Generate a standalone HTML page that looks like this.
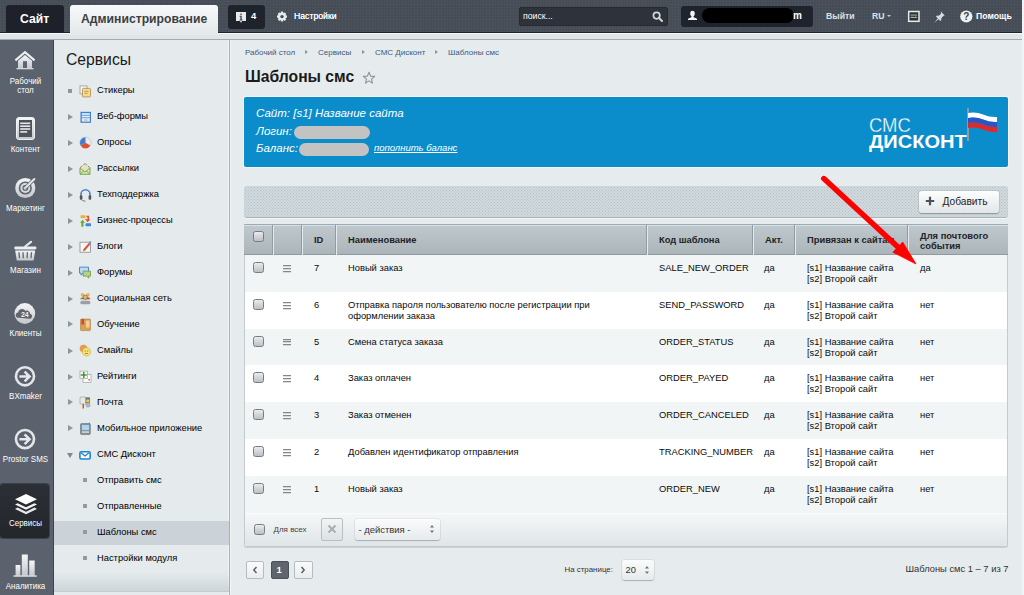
<!DOCTYPE html>
<html><head><meta charset="utf-8">
<style>
*{margin:0;padding:0;box-sizing:border-box}
html,body{width:1024px;height:595px;overflow:hidden}
body{position:relative;font-family:"Liberation Sans",sans-serif;background:#e4e9eb;color:#000}
.a{position:absolute}
.nw{white-space:nowrap}
#top{left:0;top:0;width:1024px;height:33px;background-color:#464c55;background-image:repeating-linear-gradient(90deg,rgba(255,255,255,.022) 0 1px,transparent 1px 3px),repeating-linear-gradient(0deg,rgba(255,255,255,.022) 0 1px,transparent 1px 3px);border-bottom:1px solid #202328}
#strip{left:0;top:33px;width:1024px;height:7px;background:#dfe5e8;border-top:1.5px solid #f8fafa;border-bottom:1px solid #a3abb0}
.tbtn{background:#1e2129;border-radius:3px 3px 0 0}
.tw{color:#fff;font-weight:bold}
#side{left:0;top:40px;width:54px;height:555px;background-color:#5e6571;background-image:radial-gradient(rgba(40,45,55,.10) 0.5px,transparent 0.9px);background-size:2px 2px;border-right:1px solid #3f444b}
#menu{left:54px;top:40px;width:175px;height:555px;background:#e5eaec;border-right:1px solid #f3f6f7}
#vline{left:229px;top:40px;width:1px;height:555px;background:#9fb0c4}
#vline2{left:230px;top:40px;width:1px;height:555px;background:#f2f5f6}
#content{left:231px;top:40px;width:793px;height:555px;background:#e6ebed}
.sl{color:#fff;font-size:8.2px;text-align:center;width:51px;left:0;line-height:8.6px;white-space:nowrap;transform:scaleX(0.975)}
.mi{font-size:9.36px;color:#000;left:97px;line-height:11px}
.bul{left:68px;width:4px;height:4px;background:#8f969c}
.tri{left:68px;width:0;height:0;border-left:5px solid #8f969c;border-top:3.5px solid transparent;border-bottom:3.5px solid transparent}
.ico{left:79px;width:12px;height:12px}
.sb{left:83px;width:4px;height:4px;background:#939aa0}

.bc{font-size:8px;line-height:10px;color:#3d597d;top:47.5px}
.bcs{top:50px;width:0;height:0;border-left:3px solid #8a949c;border-top:2.5px solid transparent;border-bottom:2.5px solid transparent}
.th{font-size:9.36px;font-weight:bold;color:#1f2326;line-height:10px}
.td{font-size:9.36px;color:#0a0a0a;line-height:11px}
.cb{width:11px;height:11px;border-radius:2.5px;border:1px solid #767c81;background:linear-gradient(#e9ebed,#bcc0c4);left:253px}
.hb{left:283px;width:8px;height:1px;background:#7f888f;box-shadow:0 0.5px 0 rgba(127,136,143,.5)}
.csep{top:225px;height:30px;width:2px;border-left:1px solid #919ca2;border-right:1px solid #e6eaec}
</style></head><body>
<div id="top" class="a"></div>
<div id="strip" class="a"></div>
<!-- top buttons -->
<div class="a tbtn" style="left:6px;top:5px;width:58px;height:27.5px"></div>
<div class="a tw nw" style="left:20px;top:12px;font-size:12.2px;line-height:14px">Сайт</div>
<div class="a" style="left:70px;top:5px;width:148px;height:30px;border-radius:3px 3px 0 0;background:linear-gradient(#f7f9fa,#e3e8ea)"></div>
<div class="a nw" style="left:81px;top:12px;font-size:12.2px;line-height:14px;font-weight:bold;color:#3b3f45">Администрирование</div>


<div class="a" style="left:228px;top:5px;width:37px;height:23.5px;border-radius:3px;background:#1f232c"></div>
<svg class="a" style="left:235px;top:11px" width="12" height="13" viewBox="0 0 12 13"><path d="M1 1h10v9H7l-1 2-1-2H1z" fill="#e8eaec"/><rect x="5.3" y="2.6" width="1.4" height="1.3" fill="#3a3d42"/><path d="M4.6 4.8h2.1v3.6h0.8v1H4.6v-1h0.8V5.8H4.6z" fill="#3a3d42"/></svg>
<div class="a tw nw" style="left:251px;top:10px;font-size:9.5px;line-height:11px">4</div>
<svg class="a" style="left:276px;top:11px" width="12" height="12" viewBox="0 0 12 12"><g transform="translate(6 5.6)"><g fill="#e9ebed"><rect x="-1.3" y="-5" width="2.6" height="10" rx="0.8"/><rect x="-1.3" y="-5" width="2.6" height="10" rx="0.8" transform="rotate(45)"/><rect x="-1.3" y="-5" width="2.6" height="10" rx="0.8" transform="rotate(90)"/><rect x="-1.3" y="-5" width="2.6" height="10" rx="0.8" transform="rotate(135)"/></g><circle r="3.7" fill="#e9ebed"/><circle r="1.7" fill="#464c55"/></g></svg>
<div class="a nw" style="left:294px;top:10px;font-size:8.7px;line-height:12px;color:#fff;text-shadow:0 0 0.4px #fff">Настройки</div>

<div class="a" style="left:519px;top:6.5px;width:149px;height:19.5px;border-radius:2px;background:#2e323b;border:1px solid #272a31"></div>
<div class="a nw" style="left:523px;top:10px;font-size:8.7px;line-height:12px;color:#fff">поиск...</div>
<svg class="a" style="left:652px;top:11px" width="11" height="11" viewBox="0 0 11 11"><circle cx="4.6" cy="4.6" r="3.2" fill="none" stroke="#d3d6d9" stroke-width="1.7"/><path d="M7 7l3 3" stroke="#d3d6d9" stroke-width="2" stroke-linecap="round"/></svg>

<div class="a" style="left:681px;top:6px;width:132px;height:21px;border-radius:3px;background:#1f232d"></div>
<svg class="a" style="left:687px;top:10px" width="11" height="11" viewBox="0 0 11 11"><path d="M5.5 0.8c1.7 0 2.3 1.3 2.3 2.6 0 1.3-0.6 2.6-1.4 3.1 0 0.4 0.2 0.7 0.8 0.9 1.6 0.5 2.8 1 2.8 1.8v0.9H1v-0.9c0-0.8 1.2-1.3 2.8-1.8 0.6-0.2 0.8-0.5 0.8-0.9C3.8 6 3.2 4.7 3.2 3.4c0-1.3 0.6-2.6 2.3-2.6z" fill="#f2f3f4"/></svg>
<div class="a" style="left:702px;top:8px;width:92px;height:15px;border-radius:8px;background:#000"></div>
<div class="a tw nw" style="left:793px;top:10px;font-size:10px;line-height:12px">m</div>

<div class="a nw" style="left:826px;top:10.3px;font-size:8.7px;line-height:12px;color:#dde0e4;font-weight:bold">Выйти</div>
<div class="a nw" style="left:872px;top:10.3px;font-size:8.7px;line-height:12px;color:#dde0e4;font-weight:bold">RU</div>
<div class="a" style="left:886.5px;top:15px;width:0;height:0;border-top:2.5px solid #c9cdd1;border-left:2.5px solid transparent;border-right:2.5px solid transparent"></div>
<svg class="a" style="left:907px;top:10px" width="14" height="13" viewBox="0 0 14 13"><rect x="1.7" y="1.5" width="10.3" height="9.8" fill="#2f3238" stroke="#e8eaec" stroke-width="1.5"/><rect x="3.6" y="4.6" width="6.5" height="0.9" fill="#b8bcc0"/><rect x="3.6" y="7" width="6.5" height="0.9" fill="#b8bcc0"/><rect x="4.6" y="5.6" width="0.8" height="1.3" fill="#8a8e92"/><rect x="8.2" y="5.6" width="0.8" height="1.3" fill="#8a8e92"/></svg>
<svg class="a" style="left:933px;top:10px" width="13" height="13" viewBox="0 0 13 13"><path d="M7.6 1.2l4.2 4.2-1.2 0.4-2.4 2.4 0.2 1.8-1 1-1.8-1.8-4.4 3.6 3.6-4.4L3 6.6l1-1 1.8 0.2 2.4-2.4z" fill="#d8dadd"/></svg>
<svg class="a" style="left:960px;top:10px" width="13" height="13" viewBox="0 0 13 13"><circle cx="6.3" cy="6.5" r="6.1" fill="#eef0f2"/><text x="6.3" y="10.3" text-anchor="middle" font-family="Liberation Sans" font-weight="bold" font-size="10" fill="#3c3f45">?</text></svg>
<div class="a nw" style="left:976px;top:10px;font-size:8.7px;line-height:12px;color:#fff;font-weight:bold">Помощь</div>

<div id="side" class="a"></div>

<div class="a" style="left:0;top:483.5px;width:48.5px;height:54.5px;border-radius:3px;background:linear-gradient(#2c3036,#23262b);box-shadow:0 0 0 1px #3c4047"></div>
<svg class="a" style="left:0;top:40px" width="54" height="555" viewBox="0 40 54 555">
<defs><linearGradient id="gi" x1="0" y1="0" x2="0" y2="1"><stop offset="0" stop-color="#f4f5f6"/><stop offset="1" stop-color="#c4c7cb"/></linearGradient></defs>
<!-- house -->
<path d="M15.4 60.3L25 52.2l9.6 8.1" fill="none" stroke="#eceef0" stroke-width="2.2"/>
<path d="M18 60.8L25 55l7 5.8V68.6H18z" fill="url(#gi)"/>
<rect x="23" y="61.2" width="4" height="7.4" fill="#5e6571"/>
<rect x="16.5" y="68" width="17" height="1.3" fill="#d5d8db"/>
<!-- content -->
<rect x="16.5" y="117.5" width="18" height="22" rx="2.5" fill="url(#gi)" stroke="#f0f1f2" stroke-width="1"/>
<rect x="19" y="120" width="13" height="17" fill="#4e535b"/>
<g fill="#e6e8ea"><rect x="20.2" y="122.5" width="10" height="1.6"/><rect x="20.2" y="125.4" width="10" height="1.6"/><rect x="20.2" y="128.2" width="10" height="1.6"/><rect x="20.2" y="131.1" width="7" height="1.6"/></g>
<!-- marketing -->
<circle cx="25.3" cy="188" r="10.1" fill="url(#gi)"/>
<circle cx="25.3" cy="188" r="6.6" fill="#5e6571"/>
<circle cx="25.3" cy="188" r="5" fill="#d9dcdf"/>
<circle cx="25.3" cy="188" r="3" fill="#5e6571"/>
<circle cx="25.3" cy="188" r="1.7" fill="#d9dcdf"/>
<path d="M25.3 188L34.2 179.2" stroke="#5e6571" stroke-width="3.6"/>
<path d="M26 187.3L34.4 179" stroke="#e6e8ea" stroke-width="2" stroke-linecap="round"/>
<!-- shop -->
<path d="M25.2 246.5L31 241.8" stroke="#e8eaec" stroke-width="2.2" stroke-linecap="round"/>
<rect x="14.2" y="246.6" width="22.3" height="2.9" rx="1.4" fill="#eceef0"/>
<path d="M15.2 250.6h20l-1.6 10H16.8z" fill="url(#gi)"/>
<g fill="#5e6571"><path d="M18.3 252.2h1.3l0.5 6h-1.3z"/><path d="M22.4 252.2h1.3l0.2 6h-1.3z"/><path d="M26.7 252.2h1.3l-0.2 6h-1.3z"/><path d="M30.9 252.2h1.3l-0.6 6h-1.3z"/></g>
<!-- clients -->
<circle cx="24.8" cy="313.5" r="10.4" fill="url(#gi)"/>
<path d="M18.5 317.8c-1.8 0-2.8-1.2-2.8-2.6 0-1.4 1-2.5 2.4-2.6 0.3-2 1.9-3.5 4-3.5 1.4 0 2.6 0.7 3.3 1.8 0.4-0.2 0.9-0.3 1.4-0.3 1.8 0 3.2 1.4 3.3 3.1 1.2 0.3 2 1.3 2 2.5 0 1.5-1.1 2.6-2.6 2.6z" fill="#5f646d"/>
<text x="24.8" y="316.6" text-anchor="middle" font-family="Liberation Sans" font-weight="bold" font-size="7" fill="#f0f1f2">24</text>
<!-- bxmaker -->
<circle cx="25" cy="376.3" r="9.05" fill="none" stroke="#e3e5e8" stroke-width="2.6"/>
<path d="M19.4 376.5h10M24.6 371.6l5 4.9-5 4.9" fill="none" stroke="#e6e8ea" stroke-width="2.5"/>
<!-- prostor -->
<circle cx="25" cy="439.1" r="9.05" fill="none" stroke="#e3e5e8" stroke-width="2.6"/>
<path d="M19.4 439.3h10M24.6 434.4l5 4.9-5 4.9" fill="none" stroke="#e6e8ea" stroke-width="2.5"/>
<!-- services layers -->
<path d="M26 494l11 5.3-11 5.3-11-5.3z" fill="#fff"/>
<path d="M17.6 503.2L26 507.3l8.4-4.1 2.6 1.3-11 5.3-11-5.3z" fill="#f2f3f4"/>
<path d="M17.6 507.6L26 511.7l8.4-4.1 2.6 1.3-11 5.3-11-5.3z" fill="#e6e8ea"/>
<!-- analytics -->
<g fill="url(#gi)"><rect x="15.6" y="565" width="4.8" height="11"/><rect x="21.8" y="554.5" width="6" height="21.5"/><rect x="29.2" y="560.5" width="5.5" height="15.5"/></g>
<rect x="13.5" y="575.3" width="23.3" height="1.5" fill="#d8dbde"/>
</svg>
<div class="a sl" style="top:78.2px">Рабочий<br>стол</div>
<div class="a sl" style="top:146.2px">Контент</div>
<div class="a sl" style="top:205.2px">Маркетинг</div>
<div class="a sl" style="top:267.2px">Магазин</div>
<div class="a sl" style="top:330.2px">Клиенты</div>
<div class="a sl" style="top:393.2px">BXmaker</div>
<div class="a sl" style="top:456px">Prostor SMS</div>
<div class="a sl" style="top:520px">Сервисы</div>
<div class="a sl" style="top:583px">Аналитика</div>

<div id="menu" class="a"></div>
<div class="a" style="left:54px;top:521px;width:175px;height:24px;background:#cbd3d8"></div>
<div class="a nw" style="left:66px;top:51.2px;font-size:15.7px;line-height:18px;color:#1b1b1b">Сервисы</div>
<div class="a mi nw" style="top:85px">Стикеры</div>
<div class="a bul" style="top:89px"></div>
<div class="a mi nw" style="top:111px">Веб-формы</div>
<div class="a tri" style="top:113.72px"></div>
<div class="a mi nw" style="top:137px">Опросы</div>
<div class="a tri" style="top:139.64px"></div>
<div class="a mi nw" style="top:163px">Рассылки</div>
<div class="a tri" style="top:165.66px"></div>
<div class="a mi nw" style="top:189px">Техподдержка</div>
<div class="a tri" style="top:191.58px"></div>
<div class="a mi nw" style="top:215px">Бизнес-процессы</div>
<div class="a tri" style="top:217.60px"></div>
<div class="a mi nw" style="top:241px">Блоги</div>
<div class="a tri" style="top:243.62px"></div>
<div class="a mi nw" style="top:267px">Форумы</div>
<div class="a tri" style="top:269.54px"></div>
<div class="a mi nw" style="top:293px">Социальная сеть</div>
<div class="a tri" style="top:295.56px"></div>
<div class="a mi nw" style="top:319px">Обучение</div>
<div class="a tri" style="top:321.48px"></div>
<div class="a mi nw" style="top:345px">Смайлы</div>
<div class="a tri" style="top:347.50px"></div>
<div class="a mi nw" style="top:371px">Рейтинги</div>
<div class="a tri" style="top:373.52px"></div>
<div class="a mi nw" style="top:397px">Почта</div>
<div class="a tri" style="top:399.44px"></div>
<div class="a mi nw" style="top:423px">Мобильное приложение</div>
<div class="a tri" style="top:425.46px"></div>
<div class="a mi nw" style="top:449px">СМС Дисконт</div>
<div class="a" style="left:67px;top:452.9px;width:0;height:0;border-top:5px solid #7e868e;border-left:3px solid transparent;border-right:3px solid transparent"></div>
<div class="a mi nw" style="top:475px">Отправить смс</div>
<div class="a sb" style="top:478.45px"></div>
<div class="a mi nw" style="top:501px">Отправленные</div>
<div class="a sb" style="top:504.45px"></div>
<div class="a mi nw" style="top:527px">Шаблоны смс</div>
<div class="a sb" style="top:530.35px"></div>
<div class="a mi nw" style="top:553px">Настройки модуля</div>
<div class="a sb" style="top:556.35px"></div>
<svg class="a" style="left:54px;top:40px" width="175" height="555" viewBox="54 40 175 555">
<g transform="translate(79 85.40)"><rect x="1" y="0.5" width="7" height="8" fill="#f4f4f4" stroke="#9a9a9a" stroke-width="0.8"/><rect x="3.5" y="3" width="8" height="8.5" rx="1" fill="#f5dc8a" stroke="#b4874a" stroke-width="0.8"/><rect x="5.5" y="5.5" width="4" height="0.8" fill="#b08a40"/><rect x="5.5" y="7.5" width="3" height="0.8" fill="#b08a40"/></g>
<g transform="translate(80 111.32)"><rect x="0.5" y="0.5" width="10.5" height="11" fill="#3e7fd0"/><rect x="1.8" y="1.8" width="8" height="8.5" fill="#dfeefb"/><rect x="1.8" y="3.5" width="8" height="0.9" fill="#5a95dc"/><rect x="1.8" y="6" width="8" height="0.9" fill="#5a95dc"/><rect x="4" y="8.2" width="3.5" height="1" fill="#e0a060"/></g>
<g transform="translate(85.5 142.74)"><circle r="5.6" fill="#e8ecef" stroke="#b0b6bb" stroke-width="0.6"/><path d="M0 0V-5.6A5.6 5.6 0 0 0 -4.85 2.8z" fill="#3f7fd2"/><path d="M0 0L-4.85 2.8A5.6 5.6 0 0 0 4.85 2.8z" fill="#e0502e"/></g>
<g transform="translate(79.5 162.76)"><path d="M0.5 5L5.5 0.8 10.5 5V11.5H0.5z" fill="#d8e8b8" stroke="#6e9a3c" stroke-width="0.9"/><rect x="2.5" y="2.5" width="6" height="3" fill="#f6d6d6"/><path d="M0.8 5.5l4.7 3.8 4.7-3.8M0.8 11.2l3.5-3M10.2 11.2l-3.5-3" fill="none" stroke="#6e9a3c" stroke-width="0.8"/></g>
<g transform="translate(79.5 189.18)"><path d="M1.5 6.5V5a4.5 4.5 0 0 1 9 0V6.5" fill="none" stroke="#4a7fd0" stroke-width="1.6"/><rect x="0.3" y="6" width="2.6" height="4.5" rx="1" fill="#555"/><rect x="9.1" y="6" width="2.6" height="4.5" rx="1" fill="#555"/><path d="M2 10.5q1 1.5 4 1.5" fill="none" stroke="#555" stroke-width="0.7"/></g>
<g transform="translate(79.5 214.70)"><rect x="1" y="0.5" width="5" height="3" rx="0.8" fill="#f0b030"/><path d="M7 1h2.5v3.5h1.5l-2.8 3-2.8-3H8V2.5H7z" fill="#e8502a"/><path d="M0.5 8l2.5-3 2.5 3H4v4H1.8V8z" fill="#6aa83e"/><rect x="6" y="8.5" width="5.5" height="3" rx="0.8" fill="#3a88d8"/></g>
<g transform="translate(79.5 240.72)"><rect x="0.5" y="1.5" width="10.5" height="10" fill="#f6f6f6" stroke="#8a8a8a" stroke-width="0.8"/><path d="M4 8.5L9.5 2l1.5 1.3-5.5 6.5-2 0.7z" fill="#e04a2a"/><path d="M9.5 1.2l1 -0.8 1.3 1.3-0.8 1z" fill="#5a8ad8"/></g>
<g transform="translate(79 266.64)"><path d="M0.5 0.5h9v6H4l-2 2v-2H0.5z" fill="#bcdcf6" stroke="#3d7fd0" stroke-width="0.9"/><path d="M4 4.5h7.5v5H9.5l0.5 2-2.5-2H4z" fill="#b8d08a" stroke="#6e9a3c" stroke-width="0.8"/></g>
<g transform="translate(79.5 292.66)"><circle cx="3" cy="2.2" r="1.8" fill="#e8b060"/><circle cx="8.5" cy="2.2" r="1.8" fill="#e8b060"/><path d="M0.5 6.5q1-2 2.5-2 1.5 0 2 2z" fill="#5aa040"/><path d="M6 6.5q0.5-2 2.5-2 1.5 0 2.5 2z" fill="#d8402a"/><circle cx="5.8" cy="4.6" r="2.2" fill="#eab070" stroke="#5a4030" stroke-width="0.5"/><rect x="0.8" y="8" width="10" height="3.5" rx="1.5" fill="#9aa0a6"/></g>
<g transform="translate(80 318.58)"><rect x="0.5" y="0.5" width="10" height="11.5" rx="0.8" fill="#d8a050" stroke="#b07a30" stroke-width="0.6"/><rect x="6" y="2" width="3.5" height="7" fill="#f0d0a0"/><path d="M1.5 0.5h2.5v6l-1.2-1-1.3 1z" fill="#e03a3a"/></g>
<g transform="translate(79.5 344.60)"><circle cx="4" cy="4" r="3.8" fill="#e89a50"/><circle cx="7" cy="7.2" r="4.2" fill="#f5e070" stroke="#c0a030" stroke-width="0.5"/><circle cx="5.6" cy="6.3" r="0.5" fill="#555"/><circle cx="8.3" cy="6.3" r="0.5" fill="#555"/><rect x="5.6" y="8.6" width="2.8" height="0.6" fill="#555"/></g>
<g transform="translate(79.5 370.62)"><rect x="3.5" y="3.8" width="8" height="8" fill="#fafafa" stroke="#a0a0a0" stroke-width="0.7"/><rect x="0.5" y="0.5" width="7.5" height="7.5" fill="#f8f8f8" stroke="#a0a0a0" stroke-width="0.7"/><path d="M3.5 1.5h1.5v2.2h2.2v1.5H5v2.2H3.5V5.2H1.3V3.7h2.2z" fill="#3c9a2c"/><rect x="9" y="8.5" width="1.3" height="1.3" fill="#e02020"/></g>
<g transform="translate(79.5 396.54)"><rect x="0.5" y="0.5" width="6" height="7" rx="1" fill="#e8e8e8" stroke="#909090" stroke-width="0.6"/><rect x="6" y="0.8" width="4.5" height="6" fill="#70757a"/><rect x="6.8" y="3" width="3" height="2.5" fill="#f0d040"/><circle cx="8.5" cy="8.5" r="2.5" fill="#b0b4b8"/><rect x="3" y="7.5" width="1.5" height="4.5" fill="#c06a10"/></g>
<g transform="translate(80 422.56)"><rect x="0.5" y="1" width="9.8" height="11" rx="1" fill="#8a8e92" stroke="#6a6e72" stroke-width="0.6"/><rect x="2" y="2.5" width="7" height="5" fill="#a8d8f8"/><rect x="2" y="8.8" width="7" height="1.4" fill="#e0e0e0"/><rect x="9" y="0" width="0.8" height="2" fill="#707478"/></g>
<g transform="translate(79 450.78)"><rect x="0.9" y="0.9" width="10.3" height="7.3" rx="1.5" fill="#fff8f0" stroke="#1a86d0" stroke-width="1.6"/><path d="M2 2l4 3.2 4-3.2" fill="none" stroke="#1a86d0" stroke-width="1.3"/></g>
</svg>
<div id="vline" class="a"></div>
<div id="vline2" class="a"></div>
<div id="content" class="a"></div>


<div class="a bc nw" style="left:245px">Рабочий стол</div>
<div class="a bcs" style="left:305px"></div>
<div class="a bc nw" style="left:318px">Сервисы</div>
<div class="a bcs" style="left:362px"></div>
<div class="a bc nw" style="left:375px">СМС Дисконт</div>
<div class="a bcs" style="left:435px"></div>
<div class="a bc nw" style="left:448px">Шаблоны смс</div>
<div class="a nw" style="left:245px;top:68.2px;font-size:15.7px;line-height:18px;font-weight:bold;color:#1a1a1a">Шаблоны смс</div>
<svg class="a" style="left:362px;top:71px" width="14" height="14" viewBox="0 0 14 14"><path d="M7 1.2l1.6 3.9 4.1 0.3-3.2 2.7 1 4-3.5-2.2-3.5 2.2 1-4-3.2-2.7 4.1-0.3z" fill="none" stroke="#8a939b" stroke-width="1.1" stroke-linejoin="round"/></svg>

<div class="a" style="left:244px;top:97px;width:764px;height:70px;background:#0c8dcb;border-radius:2px;box-shadow:0 0 0 1px rgba(255,250,240,.5)"></div>
<div class="a nw" style="left:256px;top:106px;font-size:11.5px;line-height:14px;font-style:italic;color:#fff">Сайт: [s1] Название сайта</div>
<div class="a nw" style="left:256px;top:124px;font-size:11.5px;line-height:14px;font-style:italic;color:#fff">Логин:</div>
<div class="a nw" style="left:256px;top:140.6px;font-size:11.5px;line-height:14px;font-style:italic;color:#fff">Баланс:</div>
<div class="a" style="left:294px;top:126px;width:76px;height:13px;border-radius:7px;background:#c3c3c3"></div>
<div class="a" style="left:299px;top:143px;width:70px;height:13px;border-radius:7px;background:#c3c3c3"></div>
<div class="a nw" style="left:374px;top:142.4px;font-size:9.5px;line-height:12px;font-style:italic;color:#fff;text-decoration:underline">пополнить баланс</div>

<div class="a" style="left:244px;top:186px;width:764px;height:32px;border-radius:3px;background-color:#d0d9dd;background-image:radial-gradient(circle,#b8c2c6 0.7px,transparent 1px),radial-gradient(circle,#b8c2c6 0.7px,transparent 1px);background-size:3px 3px;background-position:0 0,1.5px 1.5px;border-bottom:1px solid #aab4b8;box-shadow:0 1px 0 #f4f7f8"></div>
<div class="a" style="left:919px;top:191px;width:80px;height:22px;border-radius:3px;background:linear-gradient(#fdfefe,#e1e6e8);box-shadow:0 1px 1px rgba(0,0,0,.25),0 0 0 1px rgba(0,0,0,.06)"></div>
<svg class="a" style="left:925px;top:196px" width="10" height="10" viewBox="0 0 10 10"><path d="M3.9 0.8h2.2v3.1h3.1v2.2H6.1v3.1H3.9V6.1H0.8V3.9h3.1z" fill="#4a5157"/></svg>
<div class="a nw" style="left:942.5px;top:195.5px;font-size:10.2px;line-height:12px;color:#1e1e1e">Добавить</div>

<!-- table -->
<div class="a" style="left:244px;top:224px;width:764px;height:323px;border-radius:0 0 3px 3px;background:#fff;border:1px solid #c3cbcf;border-top:none;box-shadow:0 1px 0 #c8d0d4"></div>
<div class="a" style="left:244px;top:224px;width:764px;height:31px;background:linear-gradient(#bec8cd,#abb5ba);border-top:1px solid #9aabb8;border-bottom:1px solid #8f999e;box-shadow:inset 0 1px 0 rgba(235,240,243,.6)"></div>

<div class="a" style="left:245px;top:255px;width:762px;height:37px;background:#f2f5f6"></div>
<div class="a" style="left:245px;top:292px;width:762px;height:37px;background:#ffffff"></div>
<div class="a" style="left:245px;top:329px;width:762px;height:36px;background:#f2f5f6"></div>
<div class="a" style="left:245px;top:365px;width:762px;height:37px;background:#ffffff"></div>
<div class="a" style="left:245px;top:402px;width:762px;height:37px;background:#f2f5f6"></div>
<div class="a" style="left:245px;top:439px;width:762px;height:37px;background:#ffffff"></div>
<div class="a" style="left:245px;top:476px;width:762px;height:37px;background:#f2f5f6"></div>
<div class="a cb" style="top:262px"></div>
<div class="a hb" style="top:265px"></div>
<div class="a hb" style="top:268px"></div>
<div class="a hb" style="top:271px"></div>
<div class="a td nw" style="left:314px;top:263px">7</div>
<div class="a td nw" style="left:348px;top:263px">Новый заказ</div>
<div class="a td nw" style="left:659px;top:263px">SALE_NEW_ORDER</div>
<div class="a td nw" style="left:764px;top:263px">да</div>
<div class="a td nw" style="left:807px;top:263px">[s1] Название сайта<br>[s2] Второй сайт</div>
<div class="a td nw" style="left:920px;top:263px">да</div>
<div class="a cb" style="top:299px"></div>
<div class="a hb" style="top:302px"></div>
<div class="a hb" style="top:305px"></div>
<div class="a hb" style="top:308px"></div>
<div class="a td nw" style="left:314px;top:300px">6</div>
<div class="a td nw" style="left:348px;top:300px">Отправка пароля пользователю после регистрации при<br>оформлении заказа</div>
<div class="a td nw" style="left:659px;top:300px">SEND_PASSWORD</div>
<div class="a td nw" style="left:764px;top:300px">да</div>
<div class="a td nw" style="left:807px;top:300px">[s1] Название сайта<br>[s2] Второй сайт</div>
<div class="a td nw" style="left:920px;top:300px">нет</div>
<div class="a cb" style="top:336px"></div>
<div class="a hb" style="top:339px"></div>
<div class="a hb" style="top:341px"></div>
<div class="a hb" style="top:344px"></div>
<div class="a td nw" style="left:314px;top:337px">5</div>
<div class="a td nw" style="left:348px;top:337px">Смена статуса заказа</div>
<div class="a td nw" style="left:659px;top:337px">ORDER_STATUS</div>
<div class="a td nw" style="left:764px;top:337px">да</div>
<div class="a td nw" style="left:807px;top:337px">[s1] Название сайта<br>[s2] Второй сайт</div>
<div class="a td nw" style="left:920px;top:337px">нет</div>
<div class="a cb" style="top:372px"></div>
<div class="a hb" style="top:375px"></div>
<div class="a hb" style="top:378px"></div>
<div class="a hb" style="top:381px"></div>
<div class="a td nw" style="left:314px;top:373px">4</div>
<div class="a td nw" style="left:348px;top:373px">Заказ оплачен</div>
<div class="a td nw" style="left:659px;top:373px">ORDER_PAYED</div>
<div class="a td nw" style="left:764px;top:373px">да</div>
<div class="a td nw" style="left:807px;top:373px">[s1] Название сайта<br>[s2] Второй сайт</div>
<div class="a td nw" style="left:920px;top:373px">нет</div>
<div class="a cb" style="top:409px"></div>
<div class="a hb" style="top:412px"></div>
<div class="a hb" style="top:415px"></div>
<div class="a hb" style="top:418px"></div>
<div class="a td nw" style="left:314px;top:410px">3</div>
<div class="a td nw" style="left:348px;top:410px">Заказ отменен</div>
<div class="a td nw" style="left:659px;top:410px">ORDER_CANCELED</div>
<div class="a td nw" style="left:764px;top:410px">да</div>
<div class="a td nw" style="left:807px;top:410px">[s1] Название сайта<br>[s2] Второй сайт</div>
<div class="a td nw" style="left:920px;top:410px">нет</div>
<div class="a cb" style="top:446px"></div>
<div class="a hb" style="top:449px"></div>
<div class="a hb" style="top:452px"></div>
<div class="a hb" style="top:455px"></div>
<div class="a td nw" style="left:314px;top:447px">2</div>
<div class="a td nw" style="left:348px;top:447px">Добавлен идентификатор отправления</div>
<div class="a td nw" style="left:659px;top:447px">TRACKING_NUMBER</div>
<div class="a td nw" style="left:764px;top:447px">да</div>
<div class="a td nw" style="left:807px;top:447px">[s1] Название сайта<br>[s2] Второй сайт</div>
<div class="a td nw" style="left:920px;top:447px">нет</div>
<div class="a cb" style="top:483px"></div>
<div class="a hb" style="top:486px"></div>
<div class="a hb" style="top:489px"></div>
<div class="a hb" style="top:492px"></div>
<div class="a td nw" style="left:314px;top:484px">1</div>
<div class="a td nw" style="left:348px;top:484px">Новый заказ</div>
<div class="a td nw" style="left:659px;top:484px">ORDER_NEW</div>
<div class="a td nw" style="left:764px;top:484px">да</div>
<div class="a td nw" style="left:807px;top:484px">[s1] Название сайта<br>[s2] Второй сайт</div>
<div class="a td nw" style="left:920px;top:484px">нет</div>
<div class="a csep" style="left:272px"></div>
<div class="a csep" style="left:301px"></div>
<div class="a csep" style="left:335px"></div>
<div class="a csep" style="left:646px"></div>
<div class="a csep" style="left:752px"></div>
<div class="a csep" style="left:794px"></div>
<div class="a csep" style="left:907px"></div>
<div class="a cb" style="top:231.0px"></div>
<div class="a th nw" style="left:314px;top:234.5px">ID</div>
<div class="a th nw" style="left:348px;top:234.5px">Наименование</div>
<div class="a th nw" style="left:659px;top:234.5px">Код шаблона</div>
<div class="a th nw" style="left:765px;top:234.5px">Акт.</div>
<div class="a th nw" style="left:807px;top:234.5px">Привязан к сайтам</div>
<div class="a th nw" style="left:920px;top:230.5px;line-height:10.8px">Для почтового<br>события</div>

<div class="a" style="left:245px;top:513px;width:762px;height:33px;border-radius:0 0 3px 3px;background:linear-gradient(#f4f7f8,#dfe5e8);border-top:1px solid #f9fbfb"></div>
<div class="a cb" style="left:254px;top:524px"></div>
<div class="a nw" style="left:273.5px;top:525px;font-size:8px;line-height:10px;color:#3f444a">Для всех</div>
<div class="a" style="left:321px;top:518px;width:22px;height:23px;border-radius:2px;border:1px solid #b9c0c4;background:linear-gradient(#f2f4f5,#dde2e4)"></div>
<svg class="a" style="left:327px;top:524px" width="10" height="10" viewBox="0 0 10 10"><path d="M1.5 1.5l7 7M8.5 1.5l-7 7" stroke="#a6adb2" stroke-width="1.8"/></svg>
<div class="a" style="left:355px;top:519px;width:85px;height:21px;border-radius:3px;background:linear-gradient(#fbfcfc,#e6eaec);box-shadow:0 1px 1px rgba(0,0,0,.22),0 0 0 1px rgba(0,0,0,.05)"></div>
<div class="a nw" style="left:358.5px;top:524px;font-size:9.45px;line-height:11px;color:#333">- действия -</div>
<svg class="a" style="left:429px;top:524px" width="6" height="10" viewBox="0 0 6 10"><path d="M3 1l2 2.6H1zM3 9L1 6.4h4z" fill="#6c7378"/></svg>

<div class="a" style="left:246px;top:561px;width:18px;height:18px;border-radius:2px;border:1px solid #b4bcc1;background:linear-gradient(#fafbfb,#e9edef)"></div>
<svg class="a" style="left:252px;top:566px" width="6" height="8" viewBox="0 0 6 8"><path d="M4.5 1L1.8 4l2.7 3" fill="none" stroke="#555b60" stroke-width="1.4"/></svg>
<div class="a" style="left:271px;top:561px;width:17.5px;height:18px;border-radius:2px;background:#5e656d;border:1px solid #4a5057"></div>
<div class="a nw" style="left:276.5px;top:564px;font-size:9.5px;line-height:12px;color:#fff;font-weight:bold">1</div>
<div class="a" style="left:294px;top:561px;width:18.5px;height:18px;border-radius:2px;border:1px solid #b4bcc1;background:linear-gradient(#fafbfb,#e9edef)"></div>
<svg class="a" style="left:300px;top:566px" width="6" height="8" viewBox="0 0 6 8"><path d="M1.5 1L4.2 4 1.5 7" fill="none" stroke="#555b60" stroke-width="1.4"/></svg>

<div class="a nw" style="left:564.5px;top:565px;font-size:7.9px;line-height:10px;color:#333">На странице:</div>
<div class="a" style="left:622px;top:560px;width:32px;height:20px;border-radius:3px;background:linear-gradient(#fbfcfc,#e6eaec);box-shadow:0 1px 1px rgba(0,0,0,.22),0 0 0 1px rgba(0,0,0,.05)"></div>
<div class="a nw" style="left:625.5px;top:564.5px;font-size:9.36px;line-height:11px;color:#333">20</div>
<svg class="a" style="left:644px;top:565px" width="6" height="10" viewBox="0 0 6 10"><path d="M3 1l2 2.6H1zM3 9L1 6.4h4z" fill="#6c7378"/></svg>
<div class="a nw" style="left:905.5px;top:563.5px;font-size:9.36px;line-height:11px;color:#333">Шаблоны смс 1 – 7 из 7</div>

<div class="a nw" style="left:869px;top:112.5px;font-size:20.4px;line-height:24px;color:#fff;transform:scaleX(0.905);transform-origin:0 0;-webkit-text-stroke:0.35px #0c8dcb">СМС</div>
<div class="a nw" style="left:868.5px;top:131px;font-size:18.4px;line-height:22px;color:#fff;font-weight:bold;transform:scaleX(1.09);transform-origin:0 0">ДИСКОНТ</div>
<div class="a" style="left:966.5px;top:108px;width:2px;height:33px;background:#8a9aa6"></div>
<svg class="a" style="left:968px;top:112px" width="30" height="21" viewBox="0 0 30 21"><path d="M0 1q8-1.5 15 1.5t14 2.5v5q-7 0.5-14-2.5T0 6z" fill="#fff"/><path d="M0 6q8-1.5 15 1.5t14 2.5v5q-7 0.5-14-2.5T0 11z" fill="#2a55c8"/><path d="M0 11q8-1.5 15 1.5t14 2.5v5q-7 0.5-14-2.5T0 16z" fill="#e02a2a"/></svg>

<svg class="a" style="left:0;top:0" width="1024" height="595" viewBox="0 0 1024 595"><path d="M823.8 178.6L899 248" stroke="#ff0000" stroke-width="5.5" stroke-linecap="round"/><path d="M916 264L902.7 242 892.9 252.2z" fill="#ff0000" stroke="#ff0000" stroke-width="0.8" stroke-linejoin="round"/></svg>


<div class="a" style="left:54px;top:572px;width:175px;height:19px;background:linear-gradient(rgba(190,200,206,0),rgba(190,200,206,.6))"></div>
<div class="a" style="left:54px;top:591px;width:175px;height:1px;background:#c4ccd1"></div>
<div class="a" style="left:1022px;top:0;width:2px;height:595px;background:#f1f4f5"></div>
</body></html>
